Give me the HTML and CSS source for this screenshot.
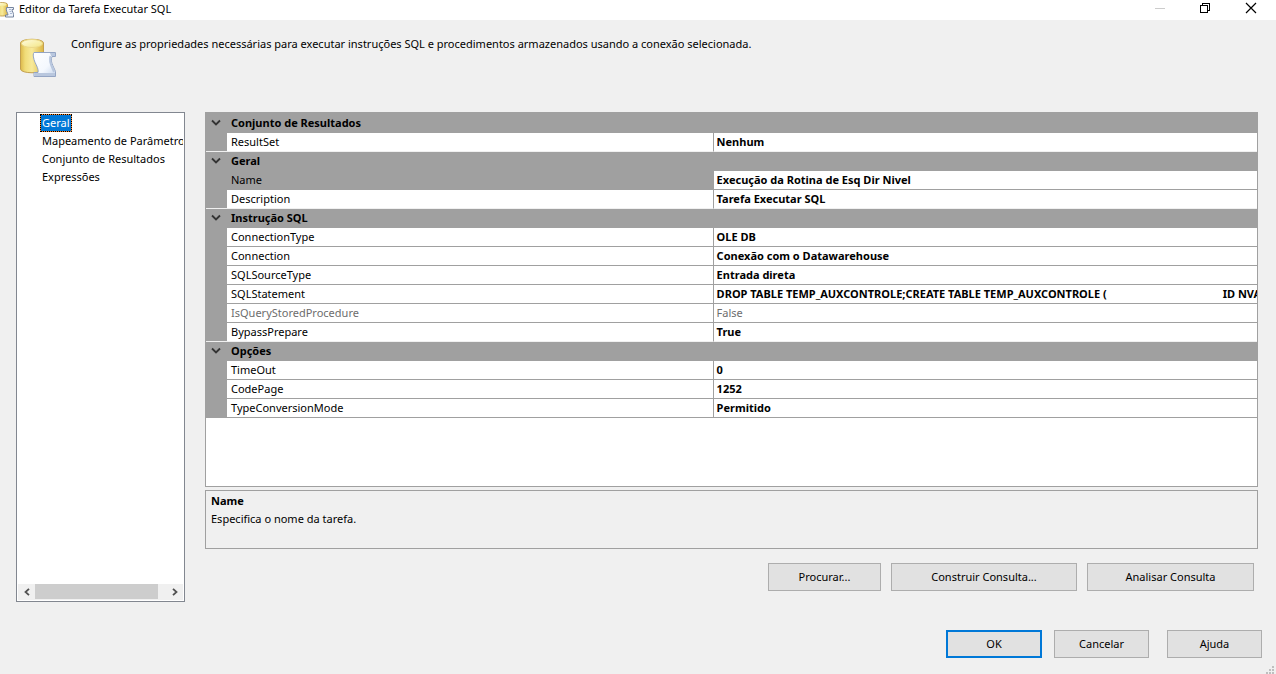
FILE: index.html
```html
<!DOCTYPE html>
<html lang="pt-BR">
<head>
<meta charset="utf-8">
<title>Editor da Tarefa Executar SQL</title>
<link rel="stylesheet" href="styles.css">
</head>
<body>
<svg class="defs" width="0" height="0" aria-hidden="true">
  <defs>
    <linearGradient id="gold" x1="0" x2="1" y1="0" y2="0">
      <stop offset="0" stop-color="#dcb84a"/><stop offset=".2" stop-color="#f0dc78"/><stop offset=".5" stop-color="#f8ea9a"/><stop offset="1" stop-color="#dcb745"/>
    </linearGradient>
    <linearGradient id="lid" x1="0" x2="1" y1="0" y2="1">
      <stop offset="0" stop-color="#fffce0"/><stop offset="1" stop-color="#f3e684"/>
    </linearGradient>
    <linearGradient id="paper" x1="0" x2="1" y1="0" y2="1">
      <stop offset="0" stop-color="#ffffff"/><stop offset=".6" stop-color="#f4f8fe"/><stop offset="1" stop-color="#c6d5ec"/>
    </linearGradient>
  </defs>
</svg>
<div class="dialog">
  <header class="titlebar">
    <svg class="app-icon" viewBox="0 0 15 16" aria-hidden="true">
      <path d="M-3 2.500v10c0 2 10.500 2 10.500 0v-10C7.500 0-3 0-3 2.500z" fill="url(#gold)" stroke="#c3a050"/>
      <ellipse cx="2" cy="2.600" rx="4.500" ry="1.600" fill="url(#lid)"/>
      <path d="M6.500 5.500h7v2h-1.500c0 2 1.500 3 1.500 5v2.500h-8v-2h2.500c0-2-2.500-4-1.500-7.500z" fill="#eef3fb" stroke="#76859f"/>
      <path d="M9 7.500h2M9.500 9.500h2M10 11.500h2" stroke="#a9b8d3"/>
    </svg>
    <h1 class="title">Editor da Tarefa Executar SQL</h1>
    <button class="win-btn" type="button" aria-label="Minimizar" disabled><svg width="12" height="12" viewBox="0 0 12 12" shape-rendering="crispEdges"><path d="M2 6.500h10" stroke="#ccc"/></svg></button>
    <button class="win-btn" type="button" aria-label="Restaurar"><svg width="12" height="12" viewBox="0 0 12 12" shape-rendering="crispEdges"><path d="M1.500 3.500h7v7h-7zM3.500 3V1.500h7v7H9" fill="none" stroke="#000"/></svg></button>
    <button class="win-btn" type="button" aria-label="Fechar"><svg width="12" height="12" viewBox="0 0 12 12"><path d="M1 1l10 10M11 1L1 11" stroke="#000" stroke-width="1.200"/></svg></button>
  </header>
  <div class="intro">
    <svg class="intro-icon" viewBox="0 0 38 40" aria-hidden="true">
      <path d="M1.500 5v26c0 5 23 5 23 0V5c0-5-23-5-23 0z" fill="url(#gold)" stroke="#c3a050"/>
      <ellipse cx="13" cy="5.500" rx="10.500" ry="4" fill="url(#lid)" stroke="#ecd98a"/>
      <path d="M15 14.500h21.500v4H33c-2 5 1 9 3.500 15v5H15v-4h4c1-4-3-9-4-13-1-4-1-5.500 0-7z" fill="url(#paper)" stroke="#94a5c4"/>
      <path d="M31 15h5v3h-4zM15.500 35H36v3H15.500z" fill="#b9c7de"/>
      <path d="M31.500 18c-2 5 1 10 3.500 16" fill="none" stroke="#b9c7de" stroke-width="2"/>
    </svg>
    <p class="intro-text">Configure as propriedades necessárias para executar instruções SQL e procedimentos armazenados usando a conexão selecionada.</p>
  </div>
  <main class="content">
    <nav class="pages">
      <ul class="page-list">
        <li><a class="page selected" href="#geral">Geral</a></li>
        <li><a class="page" href="#parametros">Mapeamento de Parâmetros</a></li>
        <li><a class="page" href="#resultados">Conjunto de Resultados</a></li>
        <li><a class="page" href="#expressoes">Expressões</a></li>
      </ul>
      <div class="scrollbar">
        <button class="scroll-btn" type="button" aria-label="Rolar para a esquerda"><svg width="8" height="8" viewBox="0 0 8 8"><path d="M6 .8L2.500 4 6 7.200" fill="none" stroke="#505050" stroke-width="1.800"/></svg></button>
        <div class="track"><div class="thumb"></div></div>
        <button class="scroll-btn" type="button" aria-label="Rolar para a direita"><svg width="8" height="8" viewBox="0 0 8 8"><path d="M2 .8L5.500 4 2 7.200" fill="none" stroke="#505050" stroke-width="1.800"/></svg></button>
      </div>
    </nav>
    <section class="editor">
      <div class="grid-box">
        <table class="props">
          <colgroup><col class="c-gutter"><col class="c-name"><col class="c-value"></colgroup>
          <tbody>
            <tr class="cat"><td><button class="expander" type="button" aria-label="Recolher Conjunto de Resultados"><svg width="10" height="8" viewBox="0 0 10 8"><path d="M1 1.500l4 4 4-4" fill="none" stroke="#333" stroke-width="1.800"/></svg></button></td><th colspan="2">Conjunto de Resultados</th></tr>
            <tr><td></td><th>ResultSet</th><td>Nenhum</td></tr>
          </tbody>
          <tbody>
            <tr class="cat"><td><button class="expander" type="button" aria-label="Recolher Geral"><svg width="10" height="8" viewBox="0 0 10 8"><path d="M1 1.500l4 4 4-4" fill="none" stroke="#333" stroke-width="1.800"/></svg></button></td><th colspan="2">Geral</th></tr>
            <tr class="current"><td></td><th>Name</th><td>Execução da Rotina de Esq Dir Nivel</td></tr>
            <tr><td></td><th>Description</th><td>Tarefa Executar SQL</td></tr>
          </tbody>
          <tbody>
            <tr class="cat"><td><button class="expander" type="button" aria-label="Recolher Instrução SQL"><svg width="10" height="8" viewBox="0 0 10 8"><path d="M1 1.500l4 4 4-4" fill="none" stroke="#333" stroke-width="1.800"/></svg></button></td><th colspan="2">Instrução SQL</th></tr>
            <tr><td></td><th>ConnectionType</th><td>OLE DB</td></tr>
            <tr><td></td><th>Connection</th><td>Conexão com o Datawarehouse</td></tr>
            <tr><td></td><th>SQLSourceType</th><td>Entrada direta</td></tr>
            <tr><td></td><th>SQLStatement</th><td><span class="sql">DROP TABLE TEMP_AUXCONTROLE;CREATE TABLE TEMP_AUXCONTROLE (</span><span>ID NVA</span></td></tr>
            <tr class="readonly"><td></td><th>IsQueryStoredProcedure</th><td>False</td></tr>
            <tr><td></td><th>BypassPrepare</th><td>True</td></tr>
          </tbody>
          <tbody>
            <tr class="cat"><td><button class="expander" type="button" aria-label="Recolher Opções"><svg width="10" height="8" viewBox="0 0 10 8"><path d="M1 1.500l4 4 4-4" fill="none" stroke="#333" stroke-width="1.800"/></svg></button></td><th colspan="2">Opções</th></tr>
            <tr><td></td><th>TimeOut</th><td>0</td></tr>
            <tr><td></td><th>CodePage</th><td>1252</td></tr>
            <tr><td></td><th>TypeConversionMode</th><td>Permitido</td></tr>
          </tbody>
        </table>
      </div>
      <div class="help">
        <h2 class="help-title">Name</h2>
        <p class="help-text">Especifica o nome da tarefa.</p>
      </div>
      <div class="actions">
        <button class="btn browse" type="button">Procurar...</button>
        <button class="btn build" type="button">Construir Consulta...</button>
        <button class="btn parse" type="button">Analisar Consulta</button>
      </div>
    </section>
  </main>
  <footer class="footer">
    <button class="btn ok" type="button">OK</button>
    <button class="btn cancel" type="button">Cancelar</button>
    <button class="btn ajuda" type="button">Ajuda</button>
  </footer>
  <svg class="grip" width="9" height="9" viewBox="0 0 9 9" shape-rendering="crispEdges" aria-hidden="true"><path d="M6 1h2v2H6zM3 4h2v2H3zM6 4h2v2H6zM0 7h2v2H0zM3 7h2v2H3zM6 7h2v2H6z" fill="#bfbfbf"/></svg>
</div>
</body>
</html>
```
FILE: styles.css
```css
* { box-sizing: border-box; }
body {
  margin: 0;
  background: #f0f0f0;
  color: #000;
  font: 11px/18px "Noto Sans", "Open Sans", sans-serif;
}
h1, h2, p, ul { margin: 0; padding: 0; font-size: 11px; font-weight: 400; }
button { font: inherit; color: inherit; padding: 0; }
.defs { position: absolute; }
.dialog { position: relative; display: flex; flex-direction: column; min-height: 100vh; }

.titlebar { display: flex; align-items: center; height: 20px; background: #fff; overflow: hidden; }
.app-icon { width: 15px; height: 16px; margin-right: 4px; }
.title { flex: 1; line-height: 18px; padding-bottom: 2px; }
.win-btn { display: flex; align-items: center; justify-content: center; width: 46px; height: 20px; border: 0; background: none; padding-bottom: 5px; }
.win-btn:last-child { margin-right: 2px; }

.intro { display: flex; align-items: flex-start; gap: 14px; height: 92px; padding: 15px 19px 0; }
.intro-icon { width: 38px; height: 40px; margin-top: 3px; }

.content { flex: 1; display: flex; gap: 20px; padding: 0 18px 0 16px; }
.pages { display: flex; flex-direction: column; width: 169px; border: 1px solid #828790; background: #fff; padding: 1px; }
.page-list { flex: 1; list-style: none; padding-left: 22px; overflow: hidden; white-space: nowrap; }
.page-list li { height: 18px; }
.page { display: inline-block; height: 18px; line-height: 16px; padding: 0 1px; border: 1px solid transparent; color: #000; text-decoration: none; }
.page.selected {
  color: #fff;
  border: 1px dotted #000;
  background: linear-gradient(#0078d7, #0078d7) padding-box, linear-gradient(#ff8728, #ff8728) border-box;
}
.scrollbar { display: flex; height: 16px; background: #f0f0f0; }
.scroll-btn { display: flex; align-items: center; justify-content: center; width: 17px; border: 0; background: none; }
.track { flex: 1; display: flex; }
.thumb { width: 94%; height: 15px; background: #cdcdcd; }

.editor { flex: 1; min-width: 0; display: flex; flex-direction: column; padding-bottom: 11px; }
.grid-box { flex: 1; border: 1px solid #a0a0a0; background: #fff; overflow: hidden; }
.props { width: 100%; table-layout: fixed; border-collapse: separate; border-spacing: 0; line-height: 18px; }
.c-gutter { width: 21px; }
.c-name { width: 46.3%; }
.props td, .props th { height: 19px; padding: 0 3px; text-align: left; white-space: nowrap; overflow: hidden; border-bottom: 1px solid #a0a0a0; }
.props th { font-weight: 400; padding-left: 4px; border-right: 1px solid #a0a0a0; }
.props td:last-child { font-weight: 700; }
.props td:first-child { background: #a0a0a0; padding: 0; }
.props .cat td, .props .cat th { background: #a0a0a0; font-weight: 700; }
.props tbody:first-of-type .cat td, .props tbody:first-of-type .cat th { height: 20px; }
.props tbody:not(:last-child) tr:last-child > * { border-bottom-color: #f0f0f0; }
.props .current th { background: #a0a0a0; }
.props .readonly th, .props .readonly td:last-child { color: #6d6d6d; font-weight: 400; }
.expander { display: flex; align-items: center; justify-content: center; width: 19px; height: 18px; border: 0; background: none; }
.sql { margin-right: 116px; }

.help { height: 59px; margin-top: 3px; padding: 1px 5px; border: 1px solid #a0a0a0; }
.help-title { font-weight: 700; }

.actions { display: flex; justify-content: flex-end; gap: 10px; margin-top: 14px; padding-right: 4px; }
.btn { height: 28px; border: 1px solid #adadad; background: #e1e1e1; line-height: 18px; }
.browse { width: 113px; }
.build { width: 186px; }
.parse { width: 167px; }
.footer { display: flex; justify-content: flex-end; padding: 28px 14px 16px; }
.ok { width: 96px; border: 2px solid #0078d7; }
.cancel { width: 95px; margin: 0 18px 0 12px; }
.ajuda { width: 95px; }
.grip { position: absolute; right: 1px; bottom: 0; }
```
